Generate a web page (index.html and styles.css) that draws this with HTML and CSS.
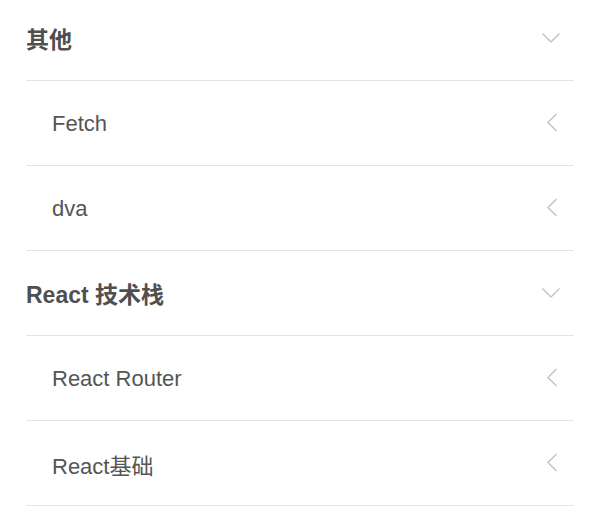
FILE: index.html
```html
<!DOCTYPE html>
<html lang="zh">
<head>
<meta charset="utf-8">
<link rel="stylesheet" href="styles.css">
</head>
<body>
<ul class="menu">
  <li class="row group">
    <span class="label">其他</span>
    <svg class="icon" viewBox="0 0 20 20"><path d="M1.5 5.5 L10 14 L18.5 5.5"/></svg>
  </li>
  <li class="row sub">
    <span class="label">Fetch</span>
    <svg class="icon" viewBox="0 0 20 20"><path d="M15.5 1 L7 9.5 L15.5 18"/></svg>
  </li>
  <li class="row sub">
    <span class="label">dva</span>
    <svg class="icon" viewBox="0 0 20 20"><path d="M15.5 1 L7 9.5 L15.5 18"/></svg>
  </li>
  <li class="row group">
    <span class="label">React 技术栈</span>
    <svg class="icon" viewBox="0 0 20 20"><path d="M1.5 5.5 L10 14 L18.5 5.5"/></svg>
  </li>
  <li class="row sub">
    <span class="label">React Router</span>
    <svg class="icon" viewBox="0 0 20 20"><path d="M15.5 1 L7 9.5 L15.5 18"/></svg>
  </li>
  <li class="row sub">
    <span class="label">React基础</span>
    <svg class="icon" viewBox="0 0 20 20"><path d="M15.5 1 L7 9.5 L15.5 18"/></svg>
  </li>
</ul>
</body>
</html>
```

FILE: styles.css
```css
html, body {
  margin: 0;
  padding: 0;
  background: #ffffff;
}
body {
  font-family: "Liberation Sans", Arial, "Noto Sans CJK SC", sans-serif;
  color: #555555;
}
.menu {
  list-style: none;
  margin: -4px 26px 0 26px;
  padding: 0;
}
.row {
  height: 84px;
  border-bottom: 1px solid #e3e3e3;
  display: flex;
  align-items: center;
  justify-content: space-between;
  padding-right: 13px;
}
.label {
  font-size: 22px;
}
.group .label {
  font-size: 23px;
  font-weight: bold;
  color: #4f4f4f;
}
.sub .label {
  padding-left: 26px;
  padding-top: 2px;
}
.icon {
  width: 20px;
  height: 20px;
  fill: none;
  stroke: #c4c4c4;
  stroke-width: 1.5;
}
```
